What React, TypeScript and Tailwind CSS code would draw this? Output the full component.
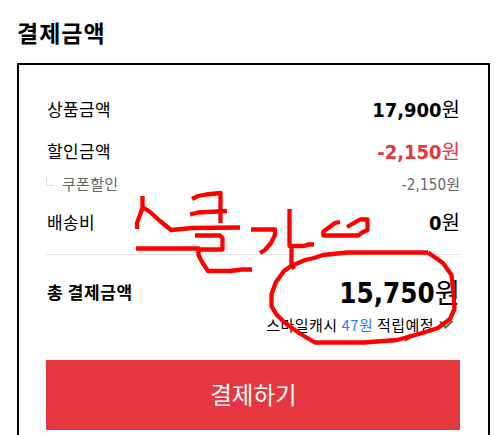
import type { ReactNode } from "react";

type RowProps = {
  label: string;
  amount: string;
  className?: string;
  amountClassName?: string;
};

// Label on the left, bold amount with its currency unit on the right
function PriceRow({ label, amount, className = "", amountClassName = "" }: RowProps) {
  return (
    <div className={`flex items-center justify-between ${className}`}>
      <span className="pl-px text-[17px] tracking-[0.4px]">{label}</span>
      <Amount className={`text-[20px] ${amountClassName}`} value={amount} />
    </div>
  );
}

function Amount({ value, className, children }: { value: string; className: string; children?: ReactNode }) {
  return (
    <span className={`flex items-baseline ${className}`}>
      <strong className="font-['DejaVu_Sans_Condensed','DejaVu_Sans',sans-serif] font-bold [font-stretch:condensed]">
        {value}
      </strong>
      {children ?? <span>원</span>}
    </span>
  );
}

// Hand-drawn marker notes over the summary
function MarkerNotes() {
  return (
    <svg
      className="pointer-events-none absolute top-0 left-0"
      width="502"
      height="435"
      viewBox="0 0 502 435"
      fill="none"
      stroke="#ff0000"
      strokeWidth="4.3"
      strokeLinejoin="round"
    >
      <path d="M142.500 196V208L138.500 219L137 223V229M142.500 207L150 212L160 221L171 230L192 228L240 227.500" />
      <path d="M192 199L198 196L206 194.500L220.500 193V223M190 214.500L198 212.500L227 211" />
      <path d="M195 235.500H220L222.500 238V249.500H199M136 248.500H198.500V255L202 262L208 271H230L242 269.500H252" />
      <path d="M251 229.500H275V235L271 243L265 250L260 253" />
      <path d="M289.500 209V246H304L308 244.500H314M291.500 247V264L294 269" />
      <path d="M340 222L335 223L323.500 231.500V235.500H358L363 232L367.500 230V219.500H360L347 227" />
      <path d="M428 252.500H347L323 255L314 258L305 260L291 266L284 271L276 282L271.500 294V306L276 314L284 322L299 333L315 342.500H364L397 340L419 334L438 328L450 319L454.500 309L453.500 294L451.500 275L443 263L428 252.500" />
      <path d="M404 339.500L412 335.500" />
    </svg>
  );
}

export default function App() {
  return (
    <div className="relative h-[435px] w-[502px] overflow-hidden bg-white font-['Noto_Sans_CJK_KR',sans-serif] text-black">
      <h2 className="ml-[17px] pt-[15px] text-[23px] leading-[34px] font-bold tracking-[1px]">결제금액</h2>

      <section className="mt-[14px] ml-[17px] h-[400px] w-[473px] border-2 border-black pt-[27px] pr-[28px] pl-[27px]">
        <PriceRow className="h-[34px]" label="상품금액" amount="17,900" />
        <PriceRow className="mt-2 h-[34px]" label="할인금액" amount="-2,150" amountClassName="text-[#e63740]" />
        <div className="flex h-[32px] items-center justify-between pt-px text-[15px] text-[#666]">
          <span className="flex items-center">
            <i className="mr-2 -mt-[6px] h-2 w-2 border-b border-l border-[#ddd]" />
            <span className="tracking-[0.3px]">쿠폰할인</span>
          </span>
          <span className="flex items-baseline">
            <span className="font-['DejaVu_Sans_Condensed','DejaVu_Sans',sans-serif] tracking-[0.15px] [font-stretch:condensed]">
              -2,150
            </span>
            원
          </span>
        </div>
        <PriceRow className="mt-[5px] h-[34px]" label="배송비" amount="0" />

        <div className="mt-[15px] flex justify-between border-t border-[#e5e5e5]">
          <strong className="mt-[23px] pl-px text-[17px] leading-7 font-bold tracking-[0.6px]">총 결제금액</strong>
          <div className="flex flex-col items-end pt-[16px]">
            <Amount className="h-[42px] text-[27.5px] leading-[40px]" value="15,750" />
            <p className="flex h-6 items-center pr-[6px] text-[15px] leading-6 tracking-[0.45px] whitespace-pre">
              스마일캐시 <span className="text-[#347fe6]">47원</span> 적립예정
              <svg className="ml-[5px] h-[10px] w-[15px]" viewBox="0 0 15 10" fill="none" stroke="#666" strokeWidth="2">
                <path d="M1 1.500L6.500 7.500L13.500 1" />
              </svg>
            </p>
          </div>
        </div>

        <button className="mt-[23px] h-[70px] w-full bg-[#e63740] pb-px pl-px text-[23.500px] text-white">결제하기</button>
      </section>

      <MarkerNotes />
    </div>
  );
}
